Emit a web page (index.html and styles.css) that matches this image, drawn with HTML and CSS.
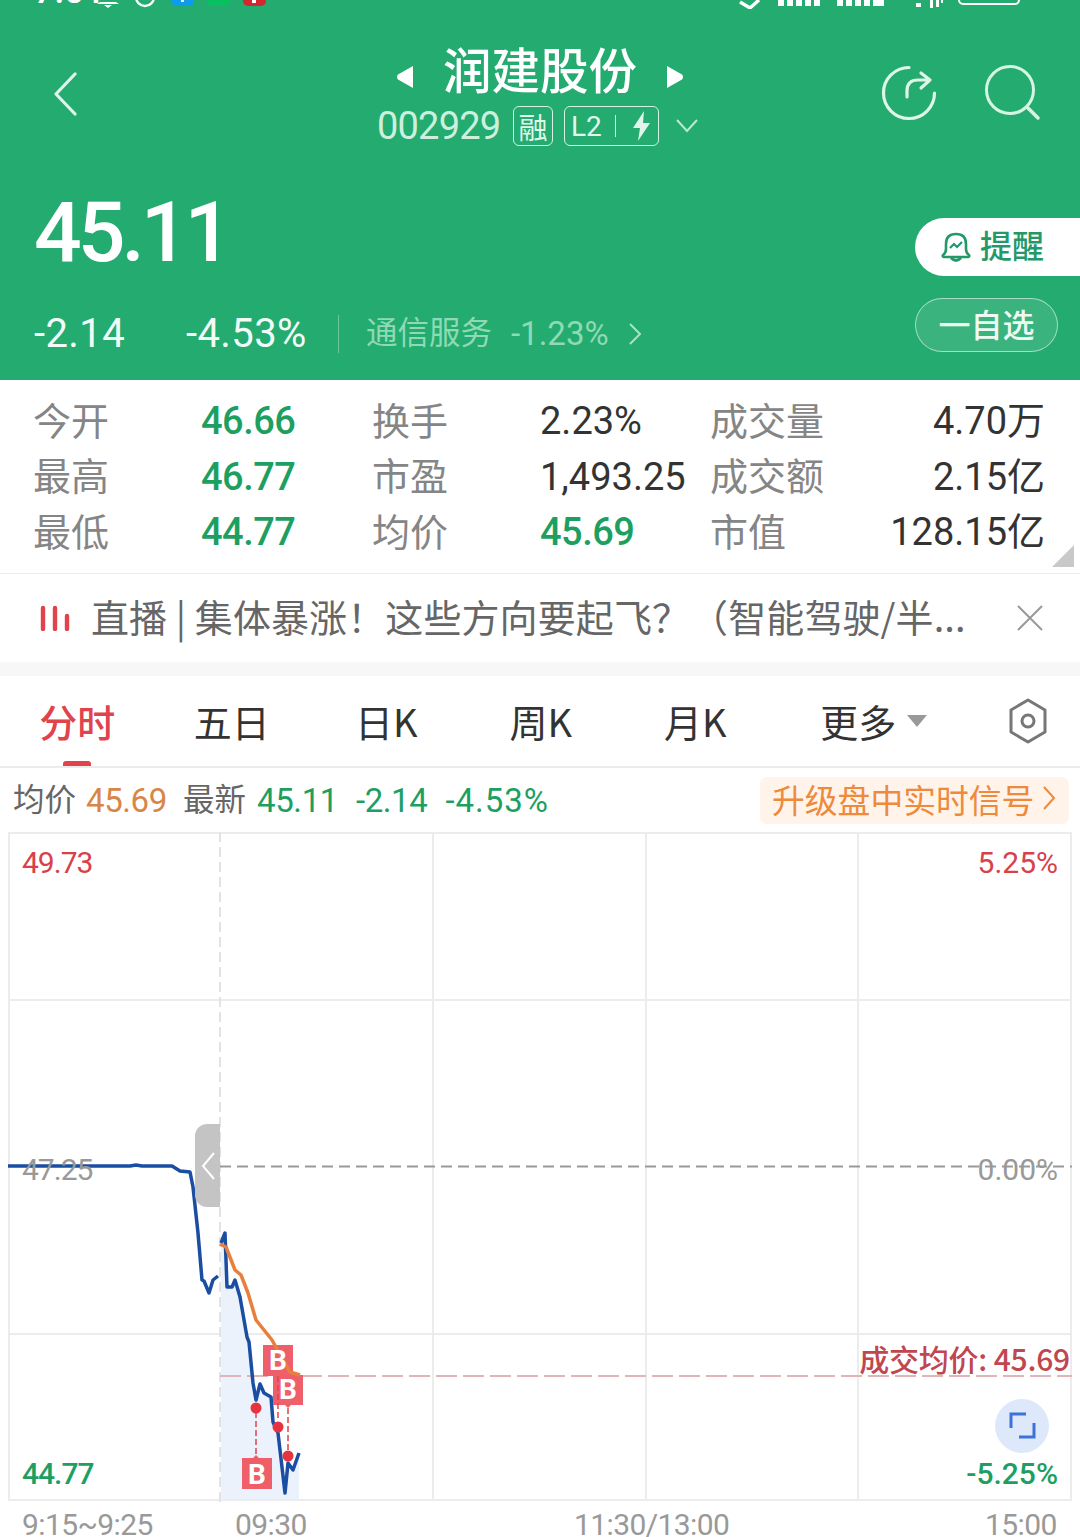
FILE: index.html
```html
<!DOCTYPE html>
<html lang="zh-CN">
<head>
<meta charset="utf-8">
<title>润建股份</title>
<link rel="stylesheet" href="styles.css">
</head>
<body>
<div class="page">
  <header class="header">
    <div class="status">
      <span class="status-time">7:01</span>
      <svg class="status-icons" width="1080" height="9" viewBox="0 0 1080 9">
        <path d="M100 2h16l3 2h-22zM104 5h8l-4 3z" fill="#fff"/>
        <circle cx="145" cy="-3" r="9" fill="none" stroke="#fff" stroke-width="2.4"/>
        <rect x="171" y="-14" width="23" height="20" rx="5" fill="#0d9bf0"/>
        <rect x="207" y="-14" width="23" height="20" rx="5" fill="#07c160"/>
        <rect x="243" y="-14" width="23" height="20" rx="5" fill="#d3262f"/>
        <rect x="181" y="0" width="3" height="2" fill="#fff"/>
        <rect x="252" y="0" width="4" height="3" fill="#fff"/>
        <path d="M740 2l10 6 9-8" fill="none" stroke="#fff" stroke-width="3.4"/>
        <path d="M778 0h6v6h-6zM787 0h6v6h-6zM796 0h6v6h-6zM805 0h6v6h-6zM814 0h6v6h-6zM837 0h6v6h-6zM846 0h6v6h-6zM855 0h6v6h-6zM864 0h6v6h-6zM873 0h11v6h-11z" fill="#fff"/>
        <path d="M916 3h5v4h-5zM930 0h3v8h-3zM936 0h3v7h-3zM941 0h2v3h-2z" fill="#fff"/>
        <rect x="959" y="-8" width="60" height="12" rx="4" fill="none" stroke="#fff" stroke-width="2"/>
      </svg>
    </div>
    <div class="nav">
      <svg class="back" width="26" height="44" viewBox="0 0 26 44"><path d="M23 2L4 22l19 20" fill="none" stroke="#dff5e9" stroke-width="3.2" stroke-linecap="round" stroke-linejoin="round"/></svg>
      <div class="nav-center">
        <div class="title-row">
          <svg width="16" height="22" viewBox="0 0 16 22"><path d="M16 0v22L1 13.500q-2-2.500 0-5z" fill="#fff"/></svg>
          <span class="title">润建股份</span>
          <svg width="16" height="22" viewBox="0 0 16 22"><path d="M0 0v22l15-8.500q2-2.500 0-5z" fill="#fff"/></svg>
        </div>
        <div class="code-row">
          <span class="code">002929</span>
          <span class="badge badge-rong">融</span>
          <span class="badge badge-l2">L2<i class="badge-sep"></i><svg width="20" height="30" viewBox="0 0 20 30"><path d="M12 0L1 17h7l-2 13 12-18h-7z" fill="#dff5e9"/></svg></span>
          <svg class="code-more" width="22" height="14" viewBox="0 0 22 14"><path d="M1 1l10 11L21 1" fill="none" stroke="#bde9d2" stroke-width="2"/></svg>
        </div>
      </div>
      <div class="nav-actions">
        <svg width="58" height="58" viewBox="0 0 58 58"><path d="M29 3.500A25.500 25.500 0 1 0 54.500 29" fill="none" stroke="#dff5e9" stroke-width="3.200" stroke-linecap="round"/><path d="M27 33v-6q0-11 11-11h12M41 9l9 7-9 8" fill="none" stroke="#dff5e9" stroke-width="3.200" stroke-linecap="round" stroke-linejoin="round"/></svg>
        <svg width="58" height="58" viewBox="0 0 58 58"><circle cx="26" cy="26" r="23.500" fill="none" stroke="#d5f5e3" stroke-width="3"/><path d="M44 44l10 10" stroke="#d5f5e3" stroke-width="3.500" stroke-linecap="round"/></svg>
      </div>
    </div>
    <div class="quote">
      <div class="quote-left">
        <div class="price">45.11</div>
        <div class="change-row">
          <span class="chg chg-a">-2.14</span>
          <span class="chg chg-b">-4.53%</span>
          <i class="chg-sep"></i>
          <span class="sector">通信服务</span>
          <span class="sector-val">-1.23%</span>
          <svg width="14" height="24" viewBox="0 0 14 24"><path d="M2 2l10 10L2 22" fill="none" stroke="#a9e2c5" stroke-width="2"/></svg>
        </div>
      </div>
      <div class="quote-right">
        <div class="btn-alert">
          <svg width="32" height="32" viewBox="0 0 32 32"><path d="M3 24q3-2 3-6v-5q0-10 10-10t10 10v5q0 4 3 6q1 2-2 2H5q-3 0-2-2zM11 27q5 5 10 0" fill="none" stroke="#23996a" stroke-width="2.600" stroke-linejoin="round"/><path d="M10 17l4-4 3 3 5-5" fill="none" stroke="#23996a" stroke-width="2.200"/></svg>
          <span>提醒</span>
        </div>
        <div class="btn-watch">一自选</div>
      </div>
    </div>
  </header>

  <section class="stats">
    <span class="lbl">今开</span><span class="val up">46.66</span><span class="lbl">换手</span><span class="val">2.23%</span><span class="lbl">成交量</span><span class="val right">4.70万</span>
    <span class="lbl">最高</span><span class="val up">46.77</span><span class="lbl">市盈</span><span class="val">1,493.25</span><span class="lbl">成交额</span><span class="val right">2.15亿</span>
    <span class="lbl">最低</span><span class="val up">44.77</span><span class="lbl">均价</span><span class="val up">45.69</span><span class="lbl">市值</span><span class="val right">128.15亿</span>
    <i class="corner"></i>
  </section>

  <section class="notice">
    <svg width="30" height="26" viewBox="0 0 30 26"><path d="M3 3v21M15 3v21M27 11v13" stroke="#e0434b" stroke-width="4.400" stroke-linecap="round"/></svg>
    <span class="notice-text">直播 | 集体暴涨！这些方向要起飞？（智能驾驶/半...</span>
    <svg class="notice-close" width="26" height="26" viewBox="0 0 26 26"><path d="M1 1l24 24M25 1L1 25" stroke="#999" stroke-width="2"/></svg>
  </section>

  <nav class="tabs">
    <span class="tab active">分时</span>
    <span class="tab">五日</span>
    <span class="tab">日K</span>
    <span class="tab">周K</span>
    <span class="tab">月K</span>
    <span class="tab tab-more">更多<svg width="20" height="12" viewBox="0 0 20 12"><path d="M0 0h20L10 12z" fill="#999"/></svg></span>
    <svg class="tab-gear" width="40" height="46" viewBox="0 0 40 46"><path d="M20 2l17 10v22L20 44 3 34V12z" fill="none" stroke="#777" stroke-width="3" stroke-linejoin="round"/><circle cx="20" cy="23" r="6" fill="none" stroke="#777" stroke-width="3"/></svg>
  </nav>

  <section class="info">
    <span class="info-l">均价</span><span class="info-avg">45.69</span>
    <span class="info-l info-new">最新</span><span class="info-up">45.11</span>
    <span class="info-up info-gap">-2.14</span><span class="info-up info-gap info-pct">-4.53%</span>
    <span class="promo">升级盘中实时信号<svg width="13" height="24" viewBox="0 0 13 24"><path d="M1 1l10 11L1 23" fill="none" stroke="#ee8a3c" stroke-width="2"/></svg></span>
  </section>

  <section class="chart">
    <svg class="chart-svg" width="1064" height="670" viewBox="8 832 1064 670">
      <g stroke="#ececec" stroke-width="2" fill="none">
        <path d="M8 833H1072M8 1000H1072M8 1334H1072M8 1500H1072"/>
        <path d="M9 832V1500M433 832V1500M646 832V1500M858 832V1500M1071 832V1500"/>
      </g>
      <path d="M220 832V1502" stroke="#e3e3e3" stroke-width="2" stroke-dasharray="10 5"/>
      <path d="M221 1243L225 1233L227 1287L232 1287L235 1280L240 1297L247 1337L249 1342L253 1383L256 1400L260 1384L264 1393L271 1397L273 1422L278 1433L285 1493L288 1463L293 1470L299 1453V1499H221Z" fill="#ebf2fc"/>
      <path d="M220 1166.500H1072" stroke="#999" stroke-width="2" stroke-dasharray="11 6"/>
      <path d="M220 1376H1072" stroke="#e0b4b8" stroke-width="2" stroke-dasharray="21 6"/>
      <path d="M8 1166L130 1166L136 1165L142 1166L172 1166L180 1171L190 1172L193 1187L198 1233L202 1280L204 1281L209 1293L213 1280L218 1276" fill="none" stroke="#1a4ea3" stroke-width="3.500" stroke-linejoin="round"/>
      <path d="M221 1243L225 1233L227 1287L232 1287L235 1280L240 1297L247 1337L249 1342L253 1383L256 1400L260 1384L264 1393L271 1397L273 1422L278 1433L285 1493L288 1463L293 1470L299 1453" fill="none" stroke="#1a4ea3" stroke-width="3.500" stroke-linejoin="round"/>
      <g fill="#ee5f69">
        <path d="M263 1345h30v31h-30z"/>
        <path d="M273 1375h30v30h-12l-3 3-3-3h-12z"/>
        <path d="M242 1458h11l3-3 3 3h13v31h-30z"/>
      </g>
      <path d="M220 1244L226 1247L235 1270L241 1275L248 1293L256 1320L272 1340L283 1360L290 1372L300 1375" fill="none" stroke="#e87f3c" stroke-width="3.500" stroke-linejoin="round"/>
      <path d="M256 1412V1455M278 1376V1420M288 1408V1450" stroke="#e0434b" stroke-width="1.500" stroke-dasharray="6 3" fill="none"/>
      <g fill="#e5343f"><circle cx="256" cy="1408" r="5.500"/><circle cx="278" cy="1427" r="5.500"/><circle cx="288" cy="1456" r="5.500"/></g>
    </svg>
    <span class="mark mark-1">B</span>
    <span class="mark mark-2">B</span>
    <span class="mark mark-3">B</span>
    <span class="lab lab-high">49.73</span>
    <span class="lab lab-high-pct">5.25%</span>
    <span class="lab lab-mid">47.25</span>
    <span class="lab lab-mid-pct">0.00%</span>
    <span class="lab lab-low">44.77</span>
    <span class="lab lab-low-pct">-5.25%</span>
    <span class="lab lab-avg">成交均价: 45.69</span>
    <div class="drawer"><svg width="14" height="28" viewBox="0 0 14 28"><path d="M13 1L2 14l11 13" fill="none" stroke="#fff" stroke-width="2"/></svg></div>
    <div class="zoom-btn"><svg width="28" height="28" viewBox="0 0 28 28"><path d="M3 16V2h15M26 11v14H11" fill="none" stroke="#3d72d9" stroke-width="3"/></svg></div>
  </section>

  <footer class="axis">
    <span>9:15~9:25</span><span>09:30</span><span>11:30/13:00</span><span>15:00</span>
  </footer>
</div>
</body>
</html>
```

FILE: styles.css
```css
* { box-sizing: border-box; }
html, body { margin: 0; padding: 0; background: #fff; }
body { font-family: Roboto, "Noto Sans CJK SC", "Liberation Sans", sans-serif; }
.page { width: 1080px; height: 1537px; overflow: hidden; }
i { display: block; }
svg { display: block; flex: none; }

.header { height: 380px; background: #24ab70; color: #fff; display: flex; flex-direction: column; }
.status { height: 9px; position: relative; overflow: hidden; }
.status-time { position: absolute; left: 34px; top: -29px; font-size: 36px; line-height: 40px; font-weight: 500; }

.nav { height: 149px; display: flex; align-items: flex-start; position: relative; }
.back { margin: 63px 0 0 52px; }
.nav-center { position: absolute; left: 377px; top: 24px; display: flex; flex-direction: column; }
.title-row { display: flex; align-items: center; margin-left: 20px; gap: 30px; height: 70px; }
.title-row svg { margin-top: 17px; }
.title { font-size: 48.500px; line-height: 70px; font-weight: 500; font-family: "Noto Sans CJK SC", sans-serif; }
.code-row { display: flex; align-items: center; margin-top: 3px; height: 40px; }
.code { font-size: 38px; line-height: 40px; color: #cdf0de; letter-spacing: -.8px; width: 136px; }
.badge { border: 1px solid #d5f3e4; border-radius: 6px; height: 40px; color: #e2f7ec; display: flex; align-items: center; }
.badge-rong { width: 40px; justify-content: center; font-size: 29px; font-family: "Noto Sans CJK SC", sans-serif; }
.badge-l2 { width: 95px; margin-left: 11px; padding-left: 6px; font-size: 28px; }
.badge-sep { width: 1px; height: 22px; background: #cdf0de; margin: 0 16px 0 13px; }
.code-more { margin-left: 17px; }
.nav-actions { margin-left: auto; margin-top: 55px; margin-right: 38px; display: flex; gap: 46px; }

.quote { flex: 1; display: flex; justify-content: space-between; padding-left: 34px; }
.quote-left { display: flex; flex-direction: column; }
.price { font-size: 84px; line-height: 98px; letter-spacing: -4px; font-weight: 500; margin-top: 26px; height: 98px; }
.change-row { display: flex; align-items: center; height: 38px; margin-top: 33px; }
.chg { font-size: 40px; line-height: 38px; color: #f2fcf6; letter-spacing: .4px; }
.chg-a { width: 152px; }
.chg-b { width: 152px; }
.chg-sep { width: 1px; height: 38px; background: #6cc79b; margin-right: 27px; }
.sector { font-size: 31.500px; line-height: 38px; color: #8fdab4; font-family: "Noto Sans CJK SC", sans-serif; width: 145px; margin-bottom: 8px; }
.sector-val { font-size: 33px; color: #8fdab4; width: 117px; margin-bottom: 2px; }
.quote-right { display: flex; flex-direction: column; width: 165px; margin-top: 60px; gap: 22px; }
.btn-alert { height: 58px; background: #fff; border-radius: 29px 0 0 29px; color: #23996a; display: flex; align-items: center; padding-left: 25px; gap: 8px; font-size: 32px; font-weight: 500; font-family: "Noto Sans CJK SC", sans-serif; }
.btn-alert span { margin-bottom: 6px; }
.btn-watch { width: 143px; height: 54px; border-radius: 27px; background: rgba(255,255,255,.1); border: 1px solid rgba(255,255,255,.55); color: #ecfaf3; font-size: 32px; line-height: 48px; text-align: center; font-family: "Noto Sans CJK SC", sans-serif; font-weight: 500; }

.stats { height: 194px; border-bottom: 1px solid #ececec; padding: 14px 35px 0 33px; display: grid; grid-template-columns: 168px 171px 168px 170px 130px 1fr; grid-auto-rows: 55.500px; align-items: center; position: relative; }
.lbl { font-size: 38px; color: #858585; font-family: "Noto Sans CJK SC", sans-serif; line-height: 48px; margin-bottom: 6px; }
.val { font-size: 38px; color: #333; line-height: 55px; white-space: nowrap; }
.val.up { color: #1d9f62; font-weight: 500; letter-spacing: -.5px; }
.val.right { text-align: right; }
.corner { position: absolute; right: 6px; bottom: 6px; width: 0; height: 0; border-style: solid; border-width: 0 0 22px 22px; border-color: transparent transparent #c9c9c9 transparent; }

.notice { height: 88px; display: flex; align-items: center; padding-left: 40px; border-bottom: 14px solid #f7f7f7; box-sizing: content-box; }
.notice-text { margin-left: 21px; margin-bottom: 6px; font-size: 38px; color: #666; white-space: nowrap; width: 874px; font-family: "Noto Sans CJK SC", sans-serif; letter-spacing: .1px; }
.notice-close { margin-left: 52px; }

.tabs { height: 92px; border-bottom: 2px solid #ececec; display: flex; align-items: center; position: relative; }
.tab { width: 154.500px; text-align: center; font-size: 38px; line-height: 92px; color: #333; font-family: "Noto Sans CJK SC", sans-serif; display: flex; justify-content: center; align-items: center; }
.tab.active { color: #e0434b; font-weight: 500; }
.tab.active::after { content: ""; position: absolute; left: 63px; bottom: 0; width: 28px; height: 5px; border-radius: 3px 3px 0 0; background: #e0434b; }
.tab-more { margin-left: 24px; gap: 11px; }
.tab-gear { margin-left: 57px; }

.info { height: 64px; display: flex; align-items: center; padding-left: 13px; font-size: 33px; letter-spacing: -.4px; }
.info-l { color: #666; font-family: "Noto Sans CJK SC", sans-serif; font-size: 31.500px; margin-bottom: 6px; letter-spacing: 0; }
.info-avg { color: #d98548; margin-left: 10px; width: 97px; }
.info-new { margin-right: 11px; }
.info-up { color: #1d9f62; }
.info-gap { margin-left: 18px; }
.info-pct { letter-spacing: 1px; }
.promo { margin-left: auto; margin-right: 11px; width: 309px; height: 47px; background: #fff3ea; border-radius: 7px; color: #ee8a3c; font-size: 32.800px; display: flex; align-items: center; padding: 0 0 4px 12px; gap: 9px; font-family: "Noto Sans CJK SC", sans-serif; white-space: nowrap; letter-spacing: 0; }

.chart { margin-left: 8px; width: 1064px; height: 668px; position: relative; }
.chart-svg { position: absolute; left: 0; top: 0; }
.lab { position: absolute; font-size: 30px; line-height: 34px; white-space: nowrap; }
.lab-high { left: 14px; top: 14px; color: #d8414a; letter-spacing: -1px; }
.lab-high-pct { right: 14px; top: 14px; color: #d8414a; }
.lab-mid { left: 14px; top: 321px; color: #999; letter-spacing: -1px; }
.lab-mid-pct { right: 14px; top: 321px; color: #999; }
.lab-low { left: 14px; top: 625px; color: #1d9f62; font-weight: 500; letter-spacing: -1px; }
.lab-low-pct { right: 14px; top: 625px; color: #1d9f62; font-weight: 500; }
.lab-avg { right: 2px; top: 509px; color: #c0474f; font-size: 30px; font-weight: 500; letter-spacing: -.2px; font-family: "Noto Sans CJK SC", sans-serif; }
.mark { position: absolute; width: 30px; height: 30px; color: #fff; font-size: 28px; font-weight: 700; line-height: 30px; text-align: center; }
.mark-1 { left: 255px; top: 514px; }
.mark-2 { left: 265px; top: 543px; }
.mark-3 { left: 234px; top: 628px; }
.drawer { position: absolute; left: 187px; top: 292px; width: 25px; height: 83px; border-radius: 12px 0 0 12px; background: #c4c4c4; display: flex; align-items: center; justify-content: center; }
.zoom-btn { position: absolute; left: 987px; top: 567px; width: 54px; height: 54px; border-radius: 50%; background: #dde8fb; display: flex; align-items: center; justify-content: center; }

.axis { display: grid; grid-template-columns: 213px 339px 411px 1fr; padding-left: 22px; font-size: 30px; line-height: 36px; color: #999; padding-top: 7px; letter-spacing: -.6px; }
```
